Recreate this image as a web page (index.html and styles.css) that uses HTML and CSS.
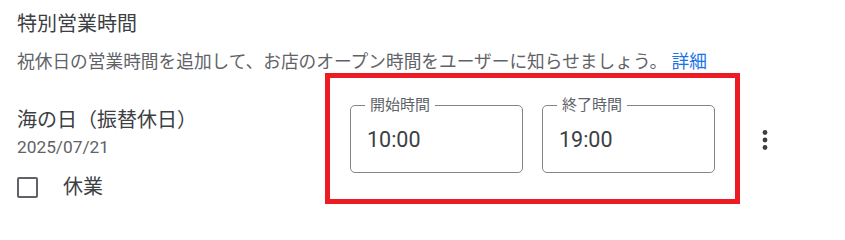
FILE: index.html
```html
<!DOCTYPE html>
<html lang="ja">
<head>
<meta charset="utf-8">
<title>特別営業時間</title>
<link rel="stylesheet" href="styles.css">
</head>
<body>
<main class="page">
  <h2 class="title">特別営業時間</h2>
  <p class="desc">祝休日の営業時間を追加して、お店のオープン時間をユーザーに知らせましょう。 <a class="link" href="#">詳細</a></p>
  <div class="row">
    <div class="day">
      <div class="day-name">海の日（振替休日）</div>
      <div class="day-date">2025/07/21</div>
      <label class="closed">
        <span class="checkbox"></span>
        <span class="closed-text">休業</span>
      </label>
    </div>
    <div class="hours">
      <fieldset class="field">
        <legend class="field-label">開始時間</legend>
        <div class="field-value">10:00</div>
      </fieldset>
      <fieldset class="field">
        <legend class="field-label">終了時間</legend>
        <div class="field-value">19:00</div>
      </fieldset>
    </div>
    <button class="more" aria-label="その他">
      <svg width="30" height="30" viewBox="0 0 30 30"><circle cx="15" cy="7.5" r="2.4"/><circle cx="15" cy="15" r="2.4"/><circle cx="15" cy="22.5" r="2.4"/></svg>
    </button>
  </div>
</main>
</body>
</html>
```

FILE: styles.css
```css
html, body {
  margin: 0;
  padding: 0;
  background: #ffffff;
}

body {
  font-family: Roboto, "Noto Sans CJK JP", "Noto Sans", sans-serif;
  color: #3c4043;
}

.page {
  padding: 10px 0 0 17px;
}

.title {
  margin: 0;
  font-size: 20px;
  line-height: 28px;
  font-weight: 400;
  color: #3c4043;
}

.desc {
  margin: 13px 0 0 0;
  font-size: 17.7px;
  line-height: 22px;
  color: #5f6368;
}

.link {
  color: #1a73e8;
  text-decoration: none;
}

.row {
  display: flex;
  align-items: flex-start;
}

.day {
  width: 308px;
  padding-top: 35px;
}

.day-name {
  font-size: 20px;
  line-height: 24px;
  color: #3c4043;
}

.day-date {
  font-size: 17.3px;
  line-height: 20px;
  color: #5f6368;
  margin-top: 5px;
}

.closed {
  display: flex;
  align-items: center;
  margin-top: 18px;
}

.checkbox {
  width: 17px;
  height: 17px;
  border: 2px solid #5f6368;
  border-radius: 2px;
}

.closed-text {
  margin-left: 25px;
  font-size: 20px;
  line-height: 24px;
  color: #3c4043;
}

.hours {
  display: flex;
  gap: 19px;
  border: 5px solid #ed1c24;
  padding: 18px 20px 26px 20px;
}

.field {
  margin: 0;
  width: 173px;
  box-sizing: border-box;
  min-inline-size: 0;
  border: 1px solid #80868b;
  border-radius: 5px;
  padding: 14px 0 20px 0;
}

.field-label {
  margin-left: 14px;
  padding: 0 5px;
  font-size: 15px;
  line-height: 18px;
  color: #5f6368;
}

.field-value {
  padding-left: 16px;
  font-size: 21.5px;
  line-height: 24px;
  color: #3c4043;
}

.more {
  margin-left: 10px;
  align-self: center;
  margin-top: 3px;
  padding: 0;
  border: 0;
  background: none;
  width: 30px;
  height: 30px;
  fill: #3c4043;
}

.more svg {
  display: block;
}
```
